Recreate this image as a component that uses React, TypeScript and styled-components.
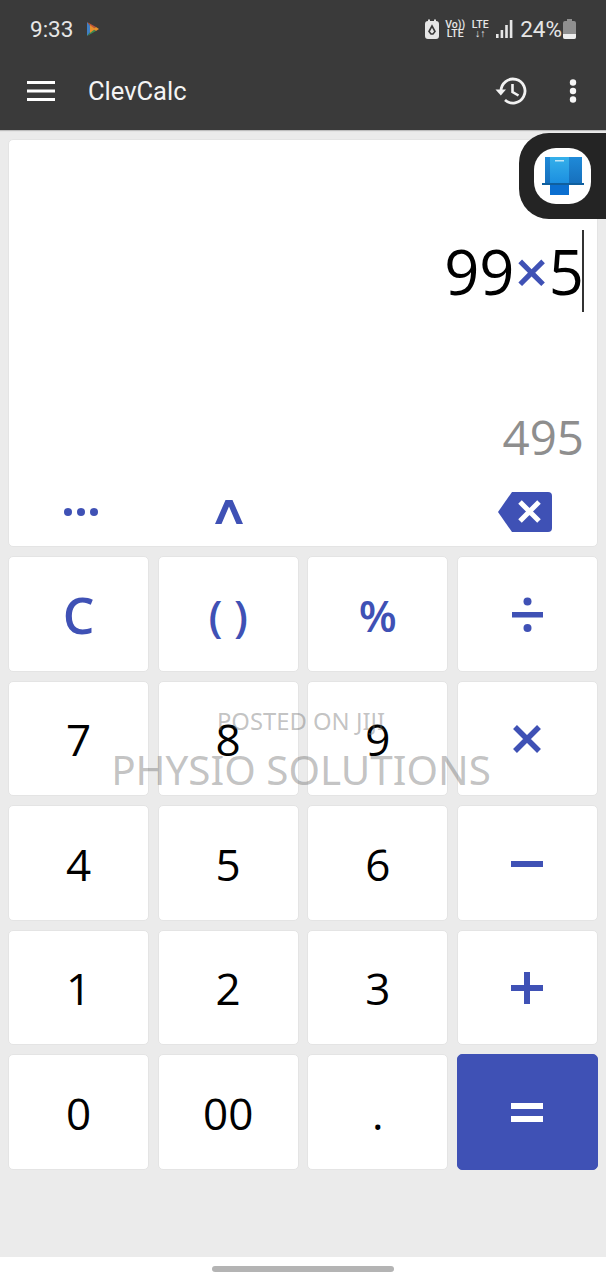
import React from "react";
import styled, { createGlobalStyle } from "styled-components";

const GlobalStyle = createGlobalStyle`
  html, body {
    margin: 0;
    padding: 0;
    background: #ebebeb;
  }
`;

const Screen = styled.div`
  position: relative;
  width: 606px;
  height: 1280px;
  overflow: hidden;
  display: flex;
  flex-direction: column;
  background: #ebebeb;
  font-family: "Open Sans", "Noto Sans", sans-serif;
`;

const Header = styled.header`
  height: 130px;
  flex-shrink: 0;
  background: #3a3a3a;
  box-shadow: 0 1px 1px #bdbdbd;
  display: flex;
  flex-direction: column;
`;

const StatusBar = styled.div`
  height: 58px;
  display: flex;
  align-items: center;
  justify-content: space-between;
  padding: 0 30px 0 30px;
  color: #e6e6e6;
  font-family: Roboto, sans-serif;
`;

const StatusGroup = styled.div<{ $gap: number }>`
  display: flex;
  align-items: center;
  gap: ${(p) => p.$gap}px;
`;

const StatusText = styled.span`
  font-size: 22.5px;
  line-height: 1;
`;

const BatteryLabel = styled(StatusText)`
  margin-left: 0;
  margin-right: -6px;
`;

const TinyStack = styled.span`
  display: flex;
  flex-direction: column;
  align-items: center;
  width: 18px;
  font-size: 10.5px;
  line-height: 9.5px;
  font-weight: 500;
  color: #e6e6e6;
`;

const AppBar = styled.div`
  flex: 1;
  display: flex;
  align-items: center;
  padding: 0 29px 0 27px;
  margin-top: -6px;
  color: #fff;
`;

const Title = styled.div`
  margin-left: 33px;
  flex: 1;
  font-family: Roboto, sans-serif;
  font-size: 25.5px;
  color: #f4f4f4;
`;

const AppBarIcons = styled.div`
  display: flex;
  align-items: center;
  gap: 42px;
`;

const Main = styled.main`
  flex: 1;
  display: flex;
  flex-direction: column;
  padding: 9px 8px 0;
  gap: 9px;
`;

const Display = styled.section`
  height: 408px;
  background: #fff;
  border: 1px solid #e4e4e4;
  border-radius: 5px;
  display: flex;
  flex-direction: column;
  box-sizing: border-box;
  padding: 0 13px 0 0;
`;

const Expression = styled.div`
  margin-top: 90px;
  height: 82px;
  display: flex;
  justify-content: flex-end;
  align-items: center;
  font-size: 61.5px;
  color: #000;
  line-height: 82px;
`;

const Times = styled.span`
  color: #3f51b5;
  font-size: 60px;
  font-weight: 600;
`;

const Cursor = styled.span`
  width: 2px;
  height: 82px;
  margin-left: -2px;
  background: #333;
`;

const Result = styled.div`
  margin-top: 95px;
  text-align: right;
  font-size: 47.5px;
  line-height: 60px;
  color: #8e8e8e;
`;

const Tools = styled.div`
  flex: 1;
  display: flex;
  align-items: center;
  padding-left: 54px;
  margin-top: 11px;
  margin-right: -13px;
`;

const ToolSlot = styled.div<{ $w: number }>`
  width: ${(p) => p.$w}px;
  display: flex;
  align-items: center;
`;

const Keypad = styled.div`
  display: grid;
  grid-template-columns: repeat(4, 1fr);
  grid-auto-rows: 115.5px;
  column-gap: 8.5px;
  row-gap: 9px;
`;

const Key = styled.div<{ $accent?: boolean; $primary?: boolean; $size?: number }>`
  display: flex;
  align-items: center;
  justify-content: center;
  box-sizing: border-box;
  padding-top: 2px;
  border-radius: 5px;
  border: 1px solid ${(p) => (p.$primary ? "#3f51b5" : "#e4e4e4")};
  background: ${(p) => (p.$primary ? "#3f51b5" : "#fff")};
  color: ${(p) => (p.$accent ? "#3f51b5" : p.$primary ? "#fff" : "#000")};
  font-size: ${(p) => p.$size ?? 44}px;
  line-height: 1;
  font-weight: ${(p) => (p.$accent || p.$primary ? 600 : 400)};
`;

const NavBar = styled.footer`
  height: 23px;
  flex-shrink: 0;
  background: #fff;
  display: flex;
  justify-content: center;
  align-items: center;
`;

const NavPill = styled.div`
  width: 182px;
  height: 6px;
  border-radius: 3px;
  background: #b4b4b4;
`;

const EdgePanel = styled.div`
  position: absolute;
  top: 133px;
  right: 0;
  width: 87px;
  height: 86px;
  background: #242424;
  border-radius: 30px 0 0 30px;
  display: flex;
  align-items: center;
  padding-left: 15px;
  box-sizing: border-box;
`;

const EdgeIcon = styled.div`
  width: 57px;
  height: 56px;
  background: #fff;
  border-radius: 22px;
  display: flex;
  align-items: center;
  justify-content: center;
`;

const Watermark = styled.div`
  position: absolute;
  top: 706px;
  left: 0;
  width: 602px;
  display: flex;
  flex-direction: column;
  align-items: center;
  pointer-events: none;
  color: rgba(110, 110, 110, 0.42);
  font-family: "Noto Sans", "Open Sans", sans-serif;
`;

const WatermarkSmall = styled.div`
  font-size: 23.8px;
  line-height: 30px;
`;

const WatermarkLarge = styled.div`
  font-size: 40.4px;
  line-height: 54px;
  margin-top: 7px;
`;

const PlayIcon = () => (
  <svg width="14" height="16" viewBox="0 0 14 16">
    <path d="M1 1 L7 8 L1 15 Z" fill="#3f7fc4" />
    <path d="M1 1 L10 6 L7 8 Z" fill="#c0563a" />
    <path d="M1 15 L10 10 L7 8 Z" fill="#3d8a52" />
    <path d="M7 8 L10 6 L13 8 L10 10 Z" fill="#e8902c" />
    <path d="M4 4 L9 8 L4 12 Z" fill="#e8902c" />
  </svg>
);

const RecycleIcon = () => (
  <svg width="14" height="20" viewBox="0 0 14 20">
    <path d="M3 0.5 H5 V2 H9 V0.5 H11 V2 Q14 2 14 5 V17 Q14 20 11 20 H3 Q0 20 0 17 V5 Q0 2 3 2 Z" fill="#e6e6e6" />
    <path d="M7 7 L10 12.5 L8 15 H6 L4 12.5 Z" fill="none" stroke="#3a3a3a" strokeWidth="1.6" />
  </svg>
);

const SignalIcon = () => (
  <svg width="17" height="20" viewBox="0 0 17 20" fill="#e6e6e6">
    <rect x="0" y="15" width="2.6" height="4" />
    <rect x="4.6" y="11" width="2.6" height="8" />
    <rect x="9.2" y="6" width="2.6" height="13" />
    <rect x="13.8" y="1" width="2.6" height="18" />
  </svg>
);

const BatteryIcon = () => (
  <svg width="13" height="20" viewBox="0 0 13 20">
    <path d="M4 0 H9 V2 H11 Q13 2 13 4 V18 Q13 20 11 20 H2 Q0 20 0 18 V4 Q0 2 2 2 H4 Z" fill="#8f8f8f" />
    <path d="M0 15 H13 V18 Q13 20 11 20 H2 Q0 20 0 18 Z" fill="#eeeeee" />
  </svg>
);

const MenuIcon = () => (
  <svg width="28" height="20" viewBox="0 0 28 20" fill="#fff">
    <rect x="0" y="0" width="28" height="3" />
    <rect x="0" y="8.5" width="28" height="3" />
    <rect x="0" y="17" width="28" height="3" />
  </svg>
);

const HistoryIcon = () => (
  <svg width="32" height="28" viewBox="0 0 32 28" fill="none">
    <path d="M6 14 A 12 12 0 1 1 10 23" stroke="#f2f2f2" strokeWidth="2.8" />
    <path d="M0.5 12.5 H11 L5.8 18.5 Z" fill="#f2f2f2" />
    <path d="M17.5 7 V15 L23.5 18.5" stroke="#f2f2f2" strokeWidth="2.6" />
  </svg>
);

const DotsIcon = () => (
  <svg width="8" height="24" viewBox="0 0 8 24" fill="#f6f6f6">
    <circle cx="4" cy="3.5" r="3.2" />
    <circle cx="4" cy="12" r="3.2" />
    <circle cx="4" cy="20.5" r="3.2" />
  </svg>
);

const MoreIcon = () => (
  <svg width="36" height="10" viewBox="0 0 36 10" fill="#3f51b5">
    <circle cx="5" cy="5" r="4" />
    <circle cx="18" cy="5" r="4" />
    <circle cx="31" cy="5" r="4" />
  </svg>
);

const CaretIcon = () => (
  <svg width="28" height="24" viewBox="0 0 28 24" fill="#3f51b5">
    <path d="M10.5 0 H17.5 L28 24 H21.5 L14 6.5 L6.5 24 H0 Z" />
  </svg>
);

const BackspaceIcon = () => (
  <svg width="54" height="40" viewBox="0 0 54 40">
    <path d="M14 0 H50 Q54 0 54 4 V36 Q54 40 50 40 H14 L0 20 Z" fill="#3f51b5" />
    <path d="M22 10 L41 29 M41 10 L22 29" stroke="#fff" strokeWidth="5" />
  </svg>
);

const DivideIcon = () => (
  <svg width="31" height="36" viewBox="0 0 31 36" fill="#3f51b5">
    <circle cx="15.5" cy="4.5" r="4" />
    <rect x="0" y="15" width="31" height="5.5" />
    <circle cx="15.5" cy="31" r="4" />
  </svg>
);

const TimesIcon = () => (
  <svg width="30" height="30" viewBox="0 0 30 30">
    <path d="M3 3 L27 27 M27 3 L3 27" stroke="#3f51b5" strokeWidth="5.5" />
  </svg>
);

const MinusIcon = () => (
  <svg width="32" height="6" viewBox="0 0 32 6" fill="#3f51b5">
    <rect width="32" height="6" />
  </svg>
);

const PlusIcon = () => (
  <svg width="32" height="32" viewBox="0 0 32 32" fill="#3f51b5">
    <rect x="0" y="13" width="32" height="6" />
    <rect x="13" y="0" width="6" height="32" />
  </svg>
);

const EqualsIcon = () => (
  <svg width="32" height="19" viewBox="0 0 32 19" fill="#fff">
    <rect width="32" height="6" />
    <rect y="13" width="32" height="6" />
  </svg>
);

const LaptopLogo = () => (
  <svg width="42" height="38" viewBox="0 0 42 38">
    <defs>
      <linearGradient id="screen" x1="0" y1="0" x2="0" y2="1">
        <stop offset="0" stopColor="#1f8ad8" />
        <stop offset="1" stopColor="#1670bd" />
      </linearGradient>
      <linearGradient id="page" x1="0" y1="0" x2="0" y2="1">
        <stop offset="0" stopColor="#35b0ea" />
        <stop offset="1" stopColor="#1c8fe0" />
      </linearGradient>
    </defs>
    <rect x="3" y="0" width="37" height="26" fill="url(#screen)" />
    <rect x="8" y="0" width="19" height="26" fill="url(#page)" />
    <rect x="13" y="3" width="9" height="1.5" fill="#bfe6f8" />
    <rect x="0" y="26" width="42" height="2" fill="#0f5f9e" />
    <rect x="8" y="28" width="19" height="10" fill="#0b6fd0" />
  </svg>
);

const keys: { label: React.ReactNode; accent?: boolean; primary?: boolean; size?: number }[] = [
  { label: "C", accent: true, size: 50 },
  { label: "( )", accent: true },
  { label: "%", accent: true },
  { label: <DivideIcon /> },
  { label: "7" },
  { label: "8" },
  { label: "9" },
  { label: <TimesIcon /> },
  { label: "4" },
  { label: "5" },
  { label: "6" },
  { label: <MinusIcon /> },
  { label: "1" },
  { label: "2" },
  { label: "3" },
  { label: <PlusIcon /> },
  { label: "0" },
  { label: "00" },
  { label: "." },
  { label: <EqualsIcon />, primary: true },
];

export default function App() {
  return (
    <Screen>
      <GlobalStyle />
      <Header>
        <StatusBar>
          <StatusGroup $gap={13}>
            <StatusText>9:33</StatusText>
            <PlayIcon />
          </StatusGroup>
          <StatusGroup $gap={7}>
            <RecycleIcon />
            <TinyStack>
              <span>Vo))</span>
              <span>LTE</span>
            </TinyStack>
            <TinyStack>
              <span>LTE</span>
              <span>↓↑</span>
            </TinyStack>
            <SignalIcon />
            <BatteryLabel>24%</BatteryLabel>
            <BatteryIcon />
          </StatusGroup>
        </StatusBar>
        <AppBar>
          <MenuIcon />
          <Title>ClevCalc</Title>
          <AppBarIcons>
            <HistoryIcon />
            <DotsIcon />
          </AppBarIcons>
        </AppBar>
      </Header>
      <Main>
        <Display>
          <Expression>
            99<Times>×</Times>5<Cursor />
          </Expression>
          <Result>495</Result>
          <Tools>
            <ToolSlot $w={152}>
              <MoreIcon />
            </ToolSlot>
            <ToolSlot $w={283}>
              <CaretIcon />
            </ToolSlot>
            <BackspaceIcon />
          </Tools>
        </Display>
        <Keypad>
          {keys.map((k, i) => (
            <Key key={i} $accent={k.accent} $primary={k.primary} $size={k.size}>
              {k.label}
            </Key>
          ))}
        </Keypad>
      </Main>
      <NavBar>
        <NavPill />
      </NavBar>
      <EdgePanel>
        <EdgeIcon>
          <LaptopLogo />
        </EdgeIcon>
      </EdgePanel>
      <Watermark>
        <WatermarkSmall>POSTED ON JIJI</WatermarkSmall>
        <WatermarkLarge>PHYSIO SOLUTIONS</WatermarkLarge>
      </Watermark>
    </Screen>
  );
}
